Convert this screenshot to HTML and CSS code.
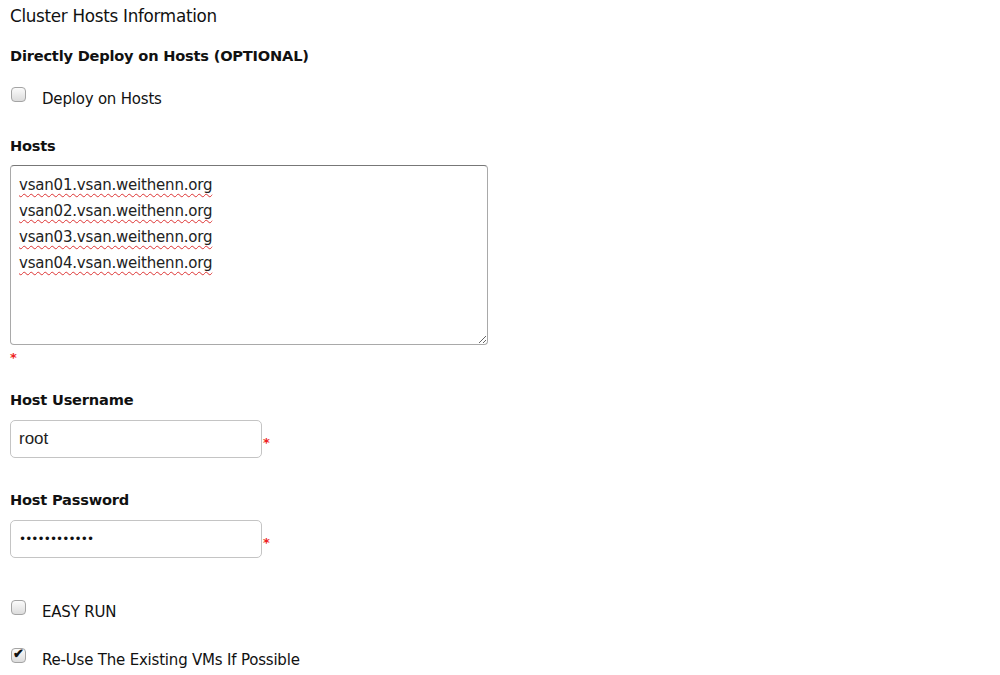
FILE: index.html
```html
<!DOCTYPE html>
<html lang="en">
<head>
<meta charset="UTF-8" />
<title>Cluster Hosts Information</title>
<link rel="stylesheet" href="styles.css">
</head>
<body>
<div class="form">
  <h2 class="title">Cluster Hosts Information</h2>

  <h3 class="label">Directly Deploy on Hosts (OPTIONAL)</h3>
  <label class="check deploy"><input type="checkbox"> <span>Deploy on Hosts</span></label>

  <h3 class="label hosts-label">Hosts</h3>
  <textarea class="hosts" spellcheck="false">vsan01.vsan.weithenn.org
vsan02.vsan.weithenn.org
vsan03.vsan.weithenn.org
vsan04.vsan.weithenn.org</textarea>
  <div class="req req-block">*</div>

  <h3 class="label user-label">Host Username</h3>
  <div class="field">
    <input type="text" value="root"><span class="req">*</span>
  </div>

  <h3 class="label pass-label">Host Password</h3>
  <div class="field">
    <input type="password" value="abcdefghijkl"><span class="req">*</span>
  </div>

  <label class="check easy"><input type="checkbox"> <span>EASY RUN</span></label>
  <label class="check reuse"><input type="checkbox" checked> <span>Re-Use The Existing VMs If Possible</span></label>
</div>
</body>
</html>
```

FILE: styles.css
```css
body {
  margin: 0;
  background: #fff;
  color: #111;
  font-family: 'DejaVu Sans', Verdana, sans-serif;
}
.form {
  padding: 4px 10px;
  display: flex;
  flex-direction: column;
  align-items: flex-start;
}
.title {
  font-size: 16.8px;
  font-weight: normal;
  margin: 2px 0 0;
  letter-spacing: -0.3px;
}
.label {
  font-size: 14.6px;
  font-weight: bold;
  margin: 0;
  letter-spacing: -0.2px;
}
.title + .label {
  margin-top: 21px;
}
.check {
  display: flex;
  align-items: center;
  font-size: 15px;
  margin-top: 22px;
  letter-spacing: -0.2px;
}
.check input {
  appearance: none;
  -webkit-appearance: none;
  width: 15px;
  height: 15px;
  margin: 0 16px 0 1px;
  border: 1px solid #a4a4a4;
  border-radius: 4px;
  background: linear-gradient(#fbfbfb, #dcdcdc);
  position: relative;
  top: -5px;
}
.check input:checked::after {
  content: '\2714';
  position: absolute;
  left: 1px;
  top: -3px;
  font-size: 13px;
  font-weight: bold;
  color: #111;
}
.deploy {
  margin-top: 26px;
}
.hosts-label {
  margin-top: 29px;
}
.hosts {
  margin-top: 11px;
  width: 478px;
  height: 180px;
  box-sizing: border-box;
  border: 1px solid #a9a9a9;
  border-top-color: #777;
  border-radius: 4px;
  padding: 6px 8px 4px;
  font-family: 'DejaVu Sans', Verdana, sans-serif;
  font-size: 15px;
  line-height: 26px;
  color: #222;
  letter-spacing: -0.2px;
  text-decoration: underline wavy #d33;
  text-decoration-thickness: 1px;
  text-underline-offset: 3px;
}
.req {
  color: #e22;
  font-size: 13px;
  font-weight: bold;
  line-height: 1;
}
.req-block {
  margin-top: 6px;
}
.user-label {
  margin-top: 27px;
}
.pass-label {
  margin-top: 33px;
}
.field {
  display: flex;
  align-items: center;
  margin-top: 12px;
}
.field input {
  width: 252px;
  height: 38px;
  box-sizing: border-box;
  border: 1px solid #c4c4c4;
  border-radius: 5px;
  padding: 0 8px;
  font-family: 'Liberation Sans', Arial, sans-serif;
  font-size: 17px;
  color: #222;
}
.field input[type=password] {
  font-family: 'DejaVu Sans', sans-serif;
  font-size: 12px;
  letter-spacing: -0.9px;
  color: #111;
}
.field .req {
  margin-left: 1px;
  position: relative;
  top: 3px;
}
.easy {
  margin-top: 45px;
}
.reuse {
  margin-top: 30px;
}
```
